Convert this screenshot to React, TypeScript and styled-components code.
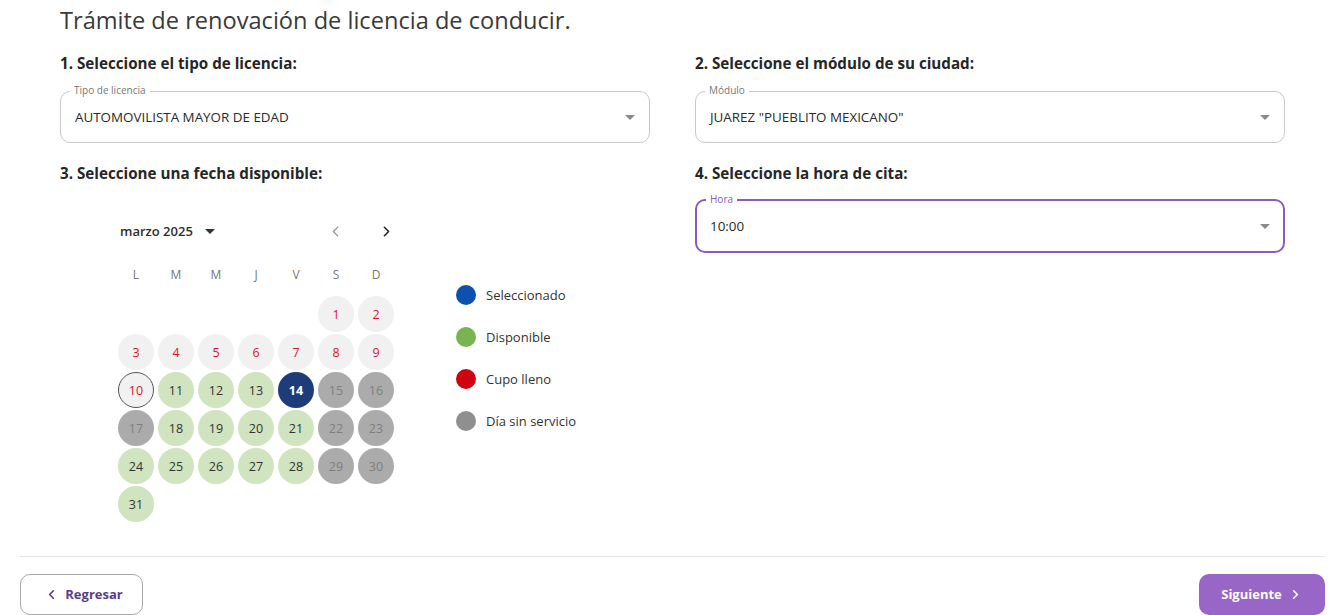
import React from 'react'
import styled, { createGlobalStyle, css } from 'styled-components'
import { ChevronLeft, ChevronRight } from 'lucide-react'

const GlobalStyle = createGlobalStyle`
  body {
    margin: 0;
    background: #fff;
    font-family: 'Open Sans', 'Noto Sans', sans-serif;
    color: #333;
  }
`

const Page = styled.div`
  padding: 0 17px 0 20px;
`

const Content = styled.div`
  padding: 0 40px;
`

const Title = styled.h1`
  margin: 0;
  padding-top: 4px;
  font-size: 23.6px;
  font-weight: 400;
  color: #3a3a3a;
  line-height: 32px;
`

const Grid = styled.div`
  display: grid;
  grid-template-columns: 1fr 1fr;
  column-gap: 45px;
  margin-top: 17px;
`

const Section = styled.div`
  display: flex;
  flex-direction: column;
  margin-bottom: 20px;
`

const Heading = styled.h2`
  margin: 0 0 18px;
  font-size: 15.2px;
  font-weight: 700;
  line-height: 20px;
  color: #262626;
`

const SelectBox = styled.div<{ $focused?: boolean }>`
  position: relative;
  height: 52px;
  box-sizing: border-box;
  border-radius: 10px;
  display: flex;
  align-items: center;
  padding: 0 14px;
  ${({ $focused }) =>
    $focused
      ? css`
          border: 2px solid #8a5cbf;
          padding: 0 13px;
          height: 54px;
          margin-top: -2px;
        `
      : css`
          border: 1px solid #c9c9c9;
        `}
`

const FloatLabel = styled.span<{ $focused?: boolean }>`
  position: absolute;
  top: -8px;
  left: 9px;
  padding: 0 4px;
  background: #fff;
  font-size: 10px;
  line-height: 12px;
  color: ${({ $focused }) => ($focused ? '#8a5cbf' : '#777')};
`

const SelectValue = styled.span`
  flex: 1;
  font-size: 13.4px;
  color: #2a2a2a;
`

const Caret = styled.span<{ $color?: string }>`
  width: 0;
  height: 0;
  border-left: 5px solid transparent;
  border-right: 5px solid transparent;
  border-top: 5px solid ${({ $color }) => $color || '#8a8a8a'};
`

const DateArea = styled.div`
  display: flex;
  align-items: flex-start;
  padding-left: 56px;
  padding-bottom: 13px;
`

const Calendar = styled.div`
  width: 280px;
  padding-top: 12px;
`

const CalHeader = styled.div`
  display: flex;
  align-items: center;
  height: 36px;
  padding-left: 4px;
`

const MonthLabel = styled.span`
  font-size: 13px;
  font-weight: 600;
  color: #2e2e2e;
  margin-right: 12px;
`

const NavGroup = styled.div`
  margin-left: auto;
  display: flex;
  align-items: center;
  gap: 34px;
  padding-right: 1px;
`

const NavIcon = styled.span<{ $dim?: boolean }>`
  display: flex;
  color: ${({ $dim }) => ($dim ? '#999' : '#222')};
`

const Week = styled.div`
  display: grid;
  grid-template-columns: repeat(7, 40px);
  justify-items: center;
  align-items: center;
`

const WeekDays = styled(Week)`
  height: 40px;
  margin-top: 5px;
  margin-bottom: 1px;
`

const WeekDay = styled.span`
  font-size: 12px;
  color: #777;
`

type Status = 'past' | 'today' | 'free' | 'off' | 'selected' | 'empty'

const dayStyles: Record<Status, ReturnType<typeof css>> = {
  past: css`
    background: #f1f1f1;
    color: #e3122c;
  `,
  today: css`
    background: #f1f1f1;
    color: #e3122c;
    border: 1px solid #555;
  `,
  free: css`
    background: #cfe4bf;
    color: #333;
  `,
  off: css`
    background: #ababab;
    color: #7f7f7f;
  `,
  selected: css`
    background: #1f3c7a;
    color: #fff;
    font-weight: 700;
  `,
  empty: css`
    background: transparent;
  `,
}

const Day = styled.span<{ $status: Status }>`
  width: 36px;
  height: 36px;
  margin: 1px 0;
  box-sizing: border-box;
  border-radius: 50%;
  display: flex;
  align-items: center;
  justify-content: center;
  font-size: 12.5px;
  ${({ $status }) => dayStyles[$status]}
`

const Legend = styled.ul`
  list-style: none;
  margin: 0;
  padding: 84px 0 0 60px;
  display: flex;
  flex-direction: column;
  gap: 22px;
`

const LegendItem = styled.li`
  display: flex;
  align-items: center;
  gap: 10px;
  height: 20px;
  font-size: 13px;
  color: #333;
`

const Dot = styled.span<{ $color: string }>`
  width: 20px;
  height: 20px;
  border-radius: 50%;
  background: ${({ $color }) => $color};
`

const Divider = styled.hr`
  margin: 0;
  border: 0;
  border-top: 1px solid #e6e6e6;
`

const Footer = styled.div`
  display: flex;
  justify-content: space-between;
  padding-top: 17px;
`

const Button = styled.button<{ $primary?: boolean }>`
  display: flex;
  align-items: center;
  justify-content: center;
  gap: 6px;
  height: 41px;
  padding-bottom: 2px;
  border-radius: 10px;
  font-family: inherit;
  font-size: 13px;
  font-weight: 700;
  cursor: pointer;
  ${({ $primary }) =>
    $primary
      ? css`
          width: 126px;
          background: #9866c6;
          color: #fff;
          border: none;
        `
      : css`
          width: 123px;
          padding-left: 10px;
          background: #fff;
          color: #5a3e8c;
          border: 1px solid #a9a9a9;
        `}
`

const weekdays = ['L', 'M', 'M', 'J', 'V', 'S', 'D']

function statusOf(d: number): Status {
  if (d < 10) return 'past'
  if (d === 10) return 'today'
  if (d === 14) return 'selected'
  if ([15, 16, 17, 22, 23, 29, 30].includes(d)) return 'off'
  return 'free'
}

function buildWeeks() {
  const cells: (number | null)[] = [null, null, null, null, null]
  for (let d = 1; d <= 31; d++) cells.push(d)
  const weeks: (number | null)[][] = []
  for (let i = 0; i < cells.length; i += 7) weeks.push(cells.slice(i, i + 7))
  return weeks
}

const legend = [
  { color: '#0b51ad', label: 'Seleccionado' },
  { color: '#79b450', label: 'Disponible' },
  { color: '#d0020f', label: 'Cupo lleno' },
  { color: '#8f8f8f', label: 'Día sin servicio' },
]

interface SelectFieldProps {
  label: string
  value: string
  focused?: boolean
}

function SelectField({ label, value, focused }: SelectFieldProps) {
  return (
    <SelectBox $focused={focused}>
      <FloatLabel $focused={focused}>{label}</FloatLabel>
      <SelectValue>{value}</SelectValue>
      <Caret />
    </SelectBox>
  )
}

function DateCalendar() {
  const weeks = buildWeeks()
  return (
    <Calendar>
      <CalHeader>
        <MonthLabel>marzo 2025</MonthLabel>
        <Caret $color="#333" />
        <NavGroup>
          <NavIcon $dim>
            <ChevronLeft size={17} strokeWidth={1.8} />
          </NavIcon>
          <NavIcon>
            <ChevronRight size={17} strokeWidth={2.2} />
          </NavIcon>
        </NavGroup>
      </CalHeader>
      <WeekDays>
        {weekdays.map((w, i) => (
          <WeekDay key={i}>{w}</WeekDay>
        ))}
      </WeekDays>
      {weeks.map((week, i) => (
        <Week key={i}>
          {week.map((d, j) =>
            d ? (
              <Day key={j} $status={statusOf(d)}>
                {d}
              </Day>
            ) : (
              <Day key={j} $status="empty" />
            ),
          )}
        </Week>
      ))}
    </Calendar>
  )
}

export default function App() {
  return (
    <>
      <GlobalStyle />
      <Page>
        <Content>
          <Title>Trámite de renovación de licencia de conducir.</Title>
          <Grid>
            <Section>
              <Heading>1. Seleccione el tipo de licencia:</Heading>
              <SelectField label="Tipo de licencia" value="AUTOMOVILISTA MAYOR DE EDAD" />
            </Section>
            <Section>
              <Heading>2. Seleccione el módulo de su ciudad:</Heading>
              <SelectField label="Módulo" value={'JUAREZ "PUEBLITO MEXICANO"'} />
            </Section>
            <Section>
              <Heading>3. Seleccione una fecha disponible:</Heading>
              <DateArea>
                <DateCalendar />
                <Legend>
                  {legend.map((l) => (
                    <LegendItem key={l.label}>
                      <Dot $color={l.color} />
                      {l.label}
                    </LegendItem>
                  ))}
                </Legend>
              </DateArea>
            </Section>
            <Section>
              <Heading>4. Seleccione la hora de cita:</Heading>
              <SelectField label="Hora" value="10:00" focused />
            </Section>
          </Grid>
        </Content>
        <Divider />
        <Footer>
          <Button>
            <ChevronLeft size={15} strokeWidth={2.6} />
            Regresar
          </Button>
          <Button $primary>
            Siguiente
            <ChevronRight size={15} strokeWidth={2.6} />
          </Button>
        </Footer>
      </Page>
    </>
  )
}
